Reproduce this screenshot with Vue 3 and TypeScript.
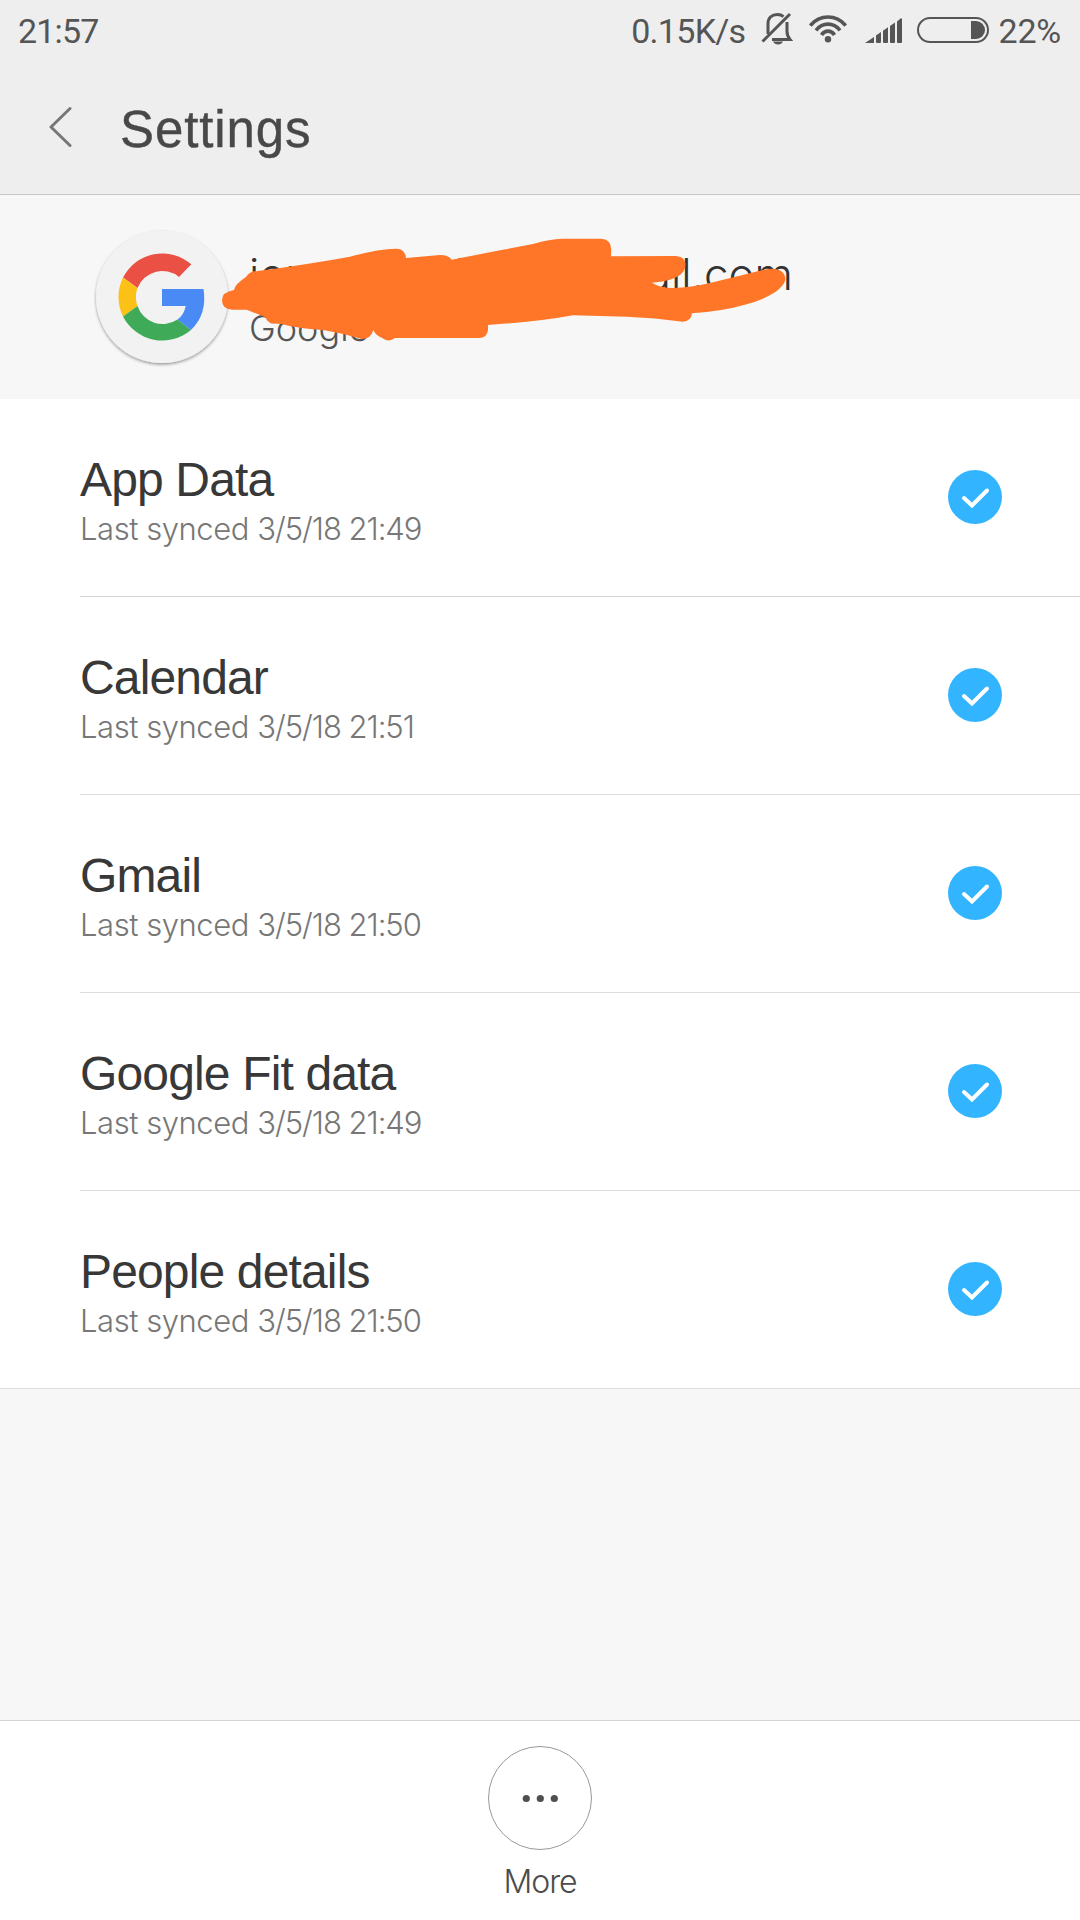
<script setup lang="ts">
interface SyncItem {
  name: string
  synced: string
}

const items: SyncItem[] = [
  { name: 'App Data', synced: '3/5/18 21:49' },
  { name: 'Calendar', synced: '3/5/18 21:51' },
  { name: 'Gmail', synced: '3/5/18 21:50' },
  { name: 'Google Fit data', synced: '3/5/18 21:49' },
  { name: 'People details', synced: '3/5/18 21:50' },
]
</script>

<template>
  <div class="screen">
    <header class="top">
      <div class="status">
        <span class="clock">21:57</span>
        <span class="speed">0.15K/s</span>
        <svg class="bell" width="32" height="34" viewBox="0 0 32 34" fill="none" stroke="#555" stroke-width="3">
          <path d="M7 22V12C7 5.500 11 2.500 16.500 2.500C19 2.500 21 3.300 22.500 4.600M26 10V19.500Q26 24 29 27.500H11" />
          <path d="M1.500 29.500L29 2" />
          <path d="M12 29.500H22Q20.500 32.500 17 32.500T12 29.500Z" fill="#555" stroke="none" />
        </svg>
        <svg class="wifi" width="38" height="28" viewBox="0 0 38 28" fill="none" stroke="#555" stroke-width="3.700">
          <path d="M1.300 10.500Q8.500 2 19 2T36.700 10.500" />
          <path d="M7 15.300Q12 9.200 19 9.200T31 15.300" />
          <path d="M12.500 20Q15 16.200 19 16.200T25.500 20" />
          <circle cx="19" cy="24.300" r="3.200" fill="#555" stroke="none" />
        </svg>
        <svg class="signal" width="38" height="26" viewBox="0 0 38 26" fill="#555">
          <path d="M0 25L9 19V25ZM11 17.500L16 14V24Q16 25 15 25H12Q11 25 11 24ZM18 12.700L23 9.200V24Q23 25 22 25H19Q18 25 18 24ZM25 8L30 4.500V24Q30 25 29 25H26Q25 25 25 24ZM32 3.500L35.500 .4Q37 0 37 1.500V24Q37 25 36 25H33Q32 25 32 24Z" />
        </svg>
        <svg class="battery" width="72" height="26" viewBox="0 0 72 26">
          <rect x="1" y="1" width="70" height="24" rx="12" fill="none" stroke="#555" stroke-width="2" />
          <path d="M54 4H59A9 9 0 0 1 59 22H54Z" fill="#555" />
        </svg>
        <span class="percent">22%</span>
      </div>
      <div class="titlebar">
        <svg class="back" width="24" height="42" viewBox="0 0 24 42" fill="none" stroke="#777" stroke-width="3" stroke-linecap="round" stroke-linejoin="round">
          <path d="M21 2.500L2 21L21 39.500" />
        </svg>
        <h1>Settings</h1>
      </div>
    </header>

    <section class="account">
      <svg class="logo" width="140" height="144" viewBox="92 226 140 144">
        <defs>
          <filter id="disc-shadow" x="-10%" y="-10%" width="120%" height="125%">
            <feDropShadow dx="0" dy="1.500" stdDeviation="1.500" flood-color="#000" flood-opacity="0.400" />
          </filter>
        </defs>
        <circle cx="162" cy="297" r="66" fill="#f2f2f2" filter="url(#disc-shadow)" />
        <path fill="#eb5044" d="M123 277.500A44.300 44.300 0 0 1 191.300 264.300L179 277A26.500 26.500 0 0 0 137.500 288Z" />
        <path fill="#fbc116" d="M123 277.500A44.300 44.300 0 0 0 123 316.500L137.500 306A26.500 26.500 0 0 1 137.500 288Z" />
        <path fill="#3fab58" d="M123 316.500A44.300 44.300 0 0 0 191 330L177.500 319.500A26.500 26.500 0 0 1 137.500 306Z" />
        <path fill="#4a8af4" d="M162 289H203.500Q207.500 314 191 330L177.500 319.500Q184 315 185.700 306H162Z" />
      </svg>
      <div class="identity">
        <div class="email"><span class="start">ion</span><span>l</span><span class="end">ail.com</span></div>
        <div class="provider">Google</div>
      </div>
      <svg class="scribble" width="564" height="104" viewBox="222 238 564 104">
        <path
          fill="#ff7628"
          d="M222 300Q222 292 234 290Q235 284 246 277Q250 271 258 271Q310 264 350 256.700Q380 248.500 397 248.700Q405 249 406 258L440 255Q449 255 451.700 259.700L500 250.300L533 244Q550 239 562 238.700H601Q611 239 611.300 250L611 256.300L675 256C688 256 688 269 680 275Q671 281.500 652 282.700Q660 288 673 288Q690 288 713 282.300L765 269.500C780 266 787 274 785 281C781 292 762 300 746.700 304.300Q722 311.500 692 313.300Q691 321.500 683 321.700Q655 317.500 626.700 316.700L573 315.300Q540 321.500 488 325V330Q487 337.500 480 338H395Q389 343 381.700 337.700Q375 335 373.300 330Q371 339 361.700 339Q342 333 323 330Q295 328 282 324L273 323.500Q267 322.500 265.700 317.300L246.700 309.700H232Q222 309 222 300Z"
        />
      </svg>
    </section>

    <main class="list">
      <div v-for="item in items" :key="item.name" class="row">
        <div class="labels">
          <div class="name">{{ item.name }}</div>
          <div class="synced">Last synced <span class="stamp">{{ item.synced }}</span></div>
        </div>
        <svg class="check" width="54" height="54" viewBox="0 0 54 54">
          <circle cx="27" cy="27" r="27" fill="#33b4ff" />
          <path d="M16 28L24 35.500L39 20.500" fill="none" stroke="#fff" stroke-width="4" stroke-linecap="round" />
        </svg>
      </div>
    </main>

    <footer class="actions">
      <svg width="104" height="104" viewBox="0 0 104 104">
        <circle cx="52" cy="52" r="51.500" fill="#fff" stroke="#999" />
        <g fill="#4f4f4f">
          <circle cx="38.300" cy="52.500" r="3.600" />
          <circle cx="52.300" cy="52.500" r="3.600" />
          <circle cx="66.300" cy="52.500" r="3.600" />
        </g>
      </svg>
      <span class="more">More</span>
    </footer>
  </div>
</template>

<style>
body {
  margin: 0;
}
</style>

<style scoped>
.screen {
  width: 1080px;
  height: 1920px;
  display: flex;
  flex-direction: column;
  background: #f7f7f7;
  overflow: hidden;
  font-family: "Liberation Sans", sans-serif;
  white-space: nowrap;
}
.top {
  height: 195px;
  box-sizing: border-box;
  background: #eee;
  border-bottom: 1px solid #c6c6c6;
}
.status {
  height: 62px;
  display: flex;
  align-items: center;
  padding: 0 18px;
  font: 34px/62px Roboto, sans-serif;
  color: #555;
}
.clock {
  flex: 1;
  letter-spacing: -0.8px;
}
.speed {
  letter-spacing: -0.7px;
}
.bell {
  margin: -4px 0 0 16px;
}
.wifi {
  margin: -4px 0 0 16px;
}
.signal {
  margin-left: 18px;
}
.battery {
  margin: -2px 9px 0 14px;
}
.percent {
  margin-right: 1px;
  letter-spacing: -0.2px;
}
.titlebar {
  display: flex;
  align-items: center;
  height: 130px;
  padding-left: 49px;
}
h1 {
  margin: 5px 0 0 47px;
  font-size: 51px;
  font-weight: 400;
  letter-spacing: 0.9px;
  color: #484848;
  -webkit-text-stroke: 0.4px #484848;
}
.account {
  position: relative;
  height: 204px;
  box-sizing: border-box;
  display: flex;
  padding: 31px 0 0 92px;
}
.identity {
  width: 544px;
  margin: 22px 0 0 17px;
}
.email {
  display: flex;
  font: 300 44px/52px Inter, sans-serif;
  color: #333;
}
.start {
  width: 206px;
}
.end {
  margin-left: auto;
}
.provider {
  font: 300 36px/42px Inter, sans-serif;
  color: #555;
  margin-top: 7px;
}
.scribble {
  position: absolute;
  left: 222px;
  top: 43px;
}
.list {
  background: #fff;
  border-bottom: 1px solid #ddd;
}
.row {
  height: 198px;
  box-sizing: border-box;
  margin-left: 80px;
  padding-right: 78px;
  display: flex;
  justify-content: space-between;
  border-bottom: 1px solid #dedede;
}
.row:first-child {
  border-bottom-color: #d4d4d4;
}
.row:last-child {
  height: 197px;
  border-bottom: 0;
}
.labels {
  padding-top: 52px;
}
.name {
  font-size: 48px;
  line-height: 58px;
  letter-spacing: -0.85px;
  color: #383838;
}
.synced {
  font: 300 31px/40px Inter, sans-serif;
  letter-spacing: -0.45px;
  color: #777;
}
.stamp {
  letter-spacing: -1.05px;
}
.check {
  margin-top: 71px;
}
.actions {
  margin-top: auto;
  height: 200px;
  box-sizing: border-box;
  border-top: 1px solid #d4d4d4;
  background: #fff;
  display: flex;
  flex-direction: column;
  align-items: center;
  padding-top: 25px;
}
.more {
  font: 300 32px/40px Inter, sans-serif;
  letter-spacing: -1.1px;
  color: #4c4c4c;
  margin-top: 12px;
}
</style>
